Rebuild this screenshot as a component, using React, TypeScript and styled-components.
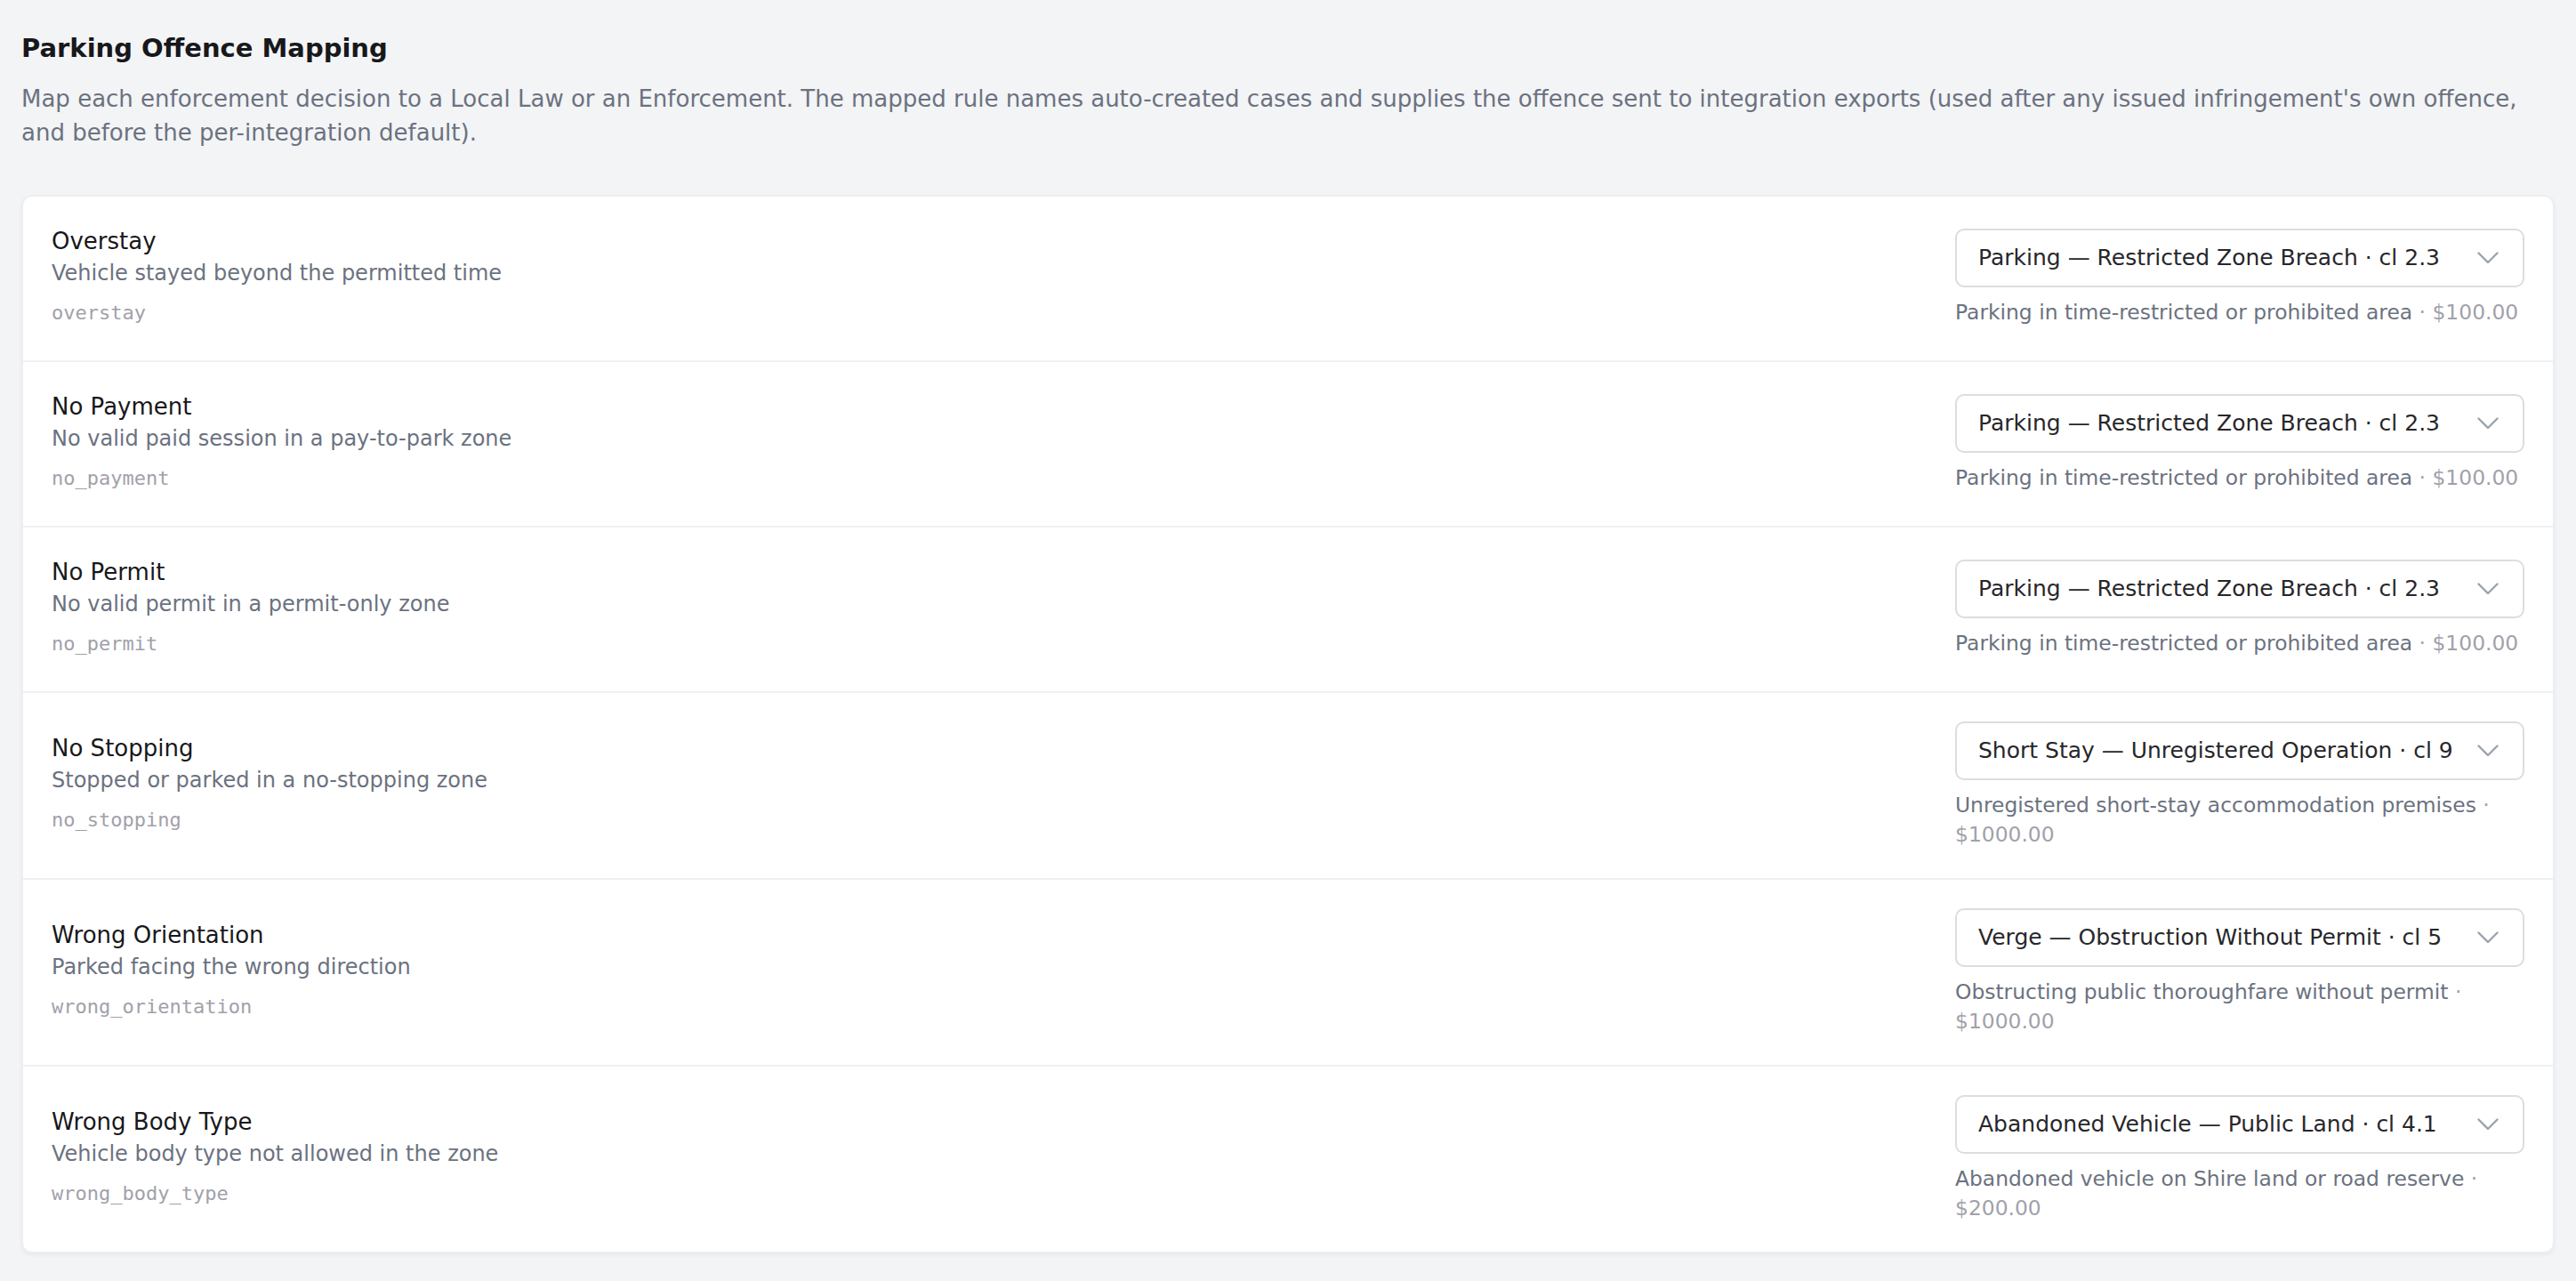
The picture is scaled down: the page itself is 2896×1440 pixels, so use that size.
import React from "react";
import styled, { createGlobalStyle } from "styled-components";

const GlobalStyle = createGlobalStyle`
  html, body {
    margin: 0;
    padding: 0;
    background: #f3f4f6;
  }
  body {
    font-family: "DejaVu Sans", "Noto Sans", sans-serif;
    color: #18181b;
    min-height: 100vh;
  }
  * { box-sizing: border-box; }
`;

const Page = styled.main`
  padding: 32px 24px 32px 24px;
  min-height: 100vh;
  background: #f3f4f6;
`;

const Title = styled.h1`
  margin: 0;
  font-family: "DejaVu Sans", sans-serif;
  font-size: 29px;
  font-weight: 700;
  line-height: 44px;
  color: #18181b;
`;

const Intro = styled.p`
  margin: 16px 0 0 0;
  font-size: 26px;
  line-height: 38.4px;
  color: #6b7280;
`;

const Card = styled.section`
  margin-top: 50px;
  background: #ffffff;
  border: 2px solid #eceef1;
  border-radius: 12px;
  box-shadow: 0 2px 4px rgba(17, 24, 39, 0.05);
  overflow: hidden;
`;

const Row = styled.div`
  display: flex;
  align-items: center;
  justify-content: space-between;
  gap: 48px;
  padding: 32px;
  & + & {
    border-top: 2px solid #f0f1f3;
  }
`;

const Info = styled.div`
  display: flex;
  flex-direction: column;
  min-width: 0;
  padding-bottom: 5px;
`;

const Name = styled.div`
  font-size: 26px;
  font-weight: 500;
  line-height: 36px;
  color: #18181b;
`;

const Description = styled.div`
  font-size: 24px;
  line-height: 36px;
  color: #6b7280;
`;

const Code = styled.code`
  margin-top: 10px;
  font-family: "DejaVu Sans Mono", "Liberation Mono", monospace;
  font-size: 22px;
  line-height: 33px;
  color: #a1a1aa;
`;

const Mapping = styled.div`
  width: 640px;
  flex-shrink: 0;
  display: flex;
  flex-direction: column;
`;

const SelectButton = styled.button`
  display: flex;
  align-items: center;
  justify-content: space-between;
  gap: 16px;
  width: 100%;
  height: 66px;
  padding: 0 27px 0 24px;
  background: #ffffff;
  border: 2px solid #dcdde0;
  border-radius: 10px;
  font-family: "DejaVu Sans", sans-serif;
  font-size: 25px;
  line-height: 36px;
  color: #27272a;
  text-align: left;
  cursor: pointer;
`;

const SelectValue = styled.span`
  white-space: nowrap;
  overflow: hidden;
  text-overflow: ellipsis;
`;

const Chevron = styled.svg`
  flex-shrink: 0;
  width: 24px;
  height: 14px;
`;

const Hint = styled.div`
  margin-top: 12px;
  font-size: 23.4px;
  line-height: 33px;
  color: #6b7280;
`;

const Price = styled.span`
  color: #a1a1aa;
`;

type Item = {
  name: string;
  description: string;
  code: string;
  rule: string;
  hint: string;
  price: string;
};

const items: Item[] = [
  {
    name: "Overstay",
    description: "Vehicle stayed beyond the permitted time",
    code: "overstay",
    rule: "Parking — Restricted Zone Breach · cl 2.3",
    hint: "Parking in time-restricted or prohibited area",
    price: "$100.00",
  },
  {
    name: "No Payment",
    description: "No valid paid session in a pay-to-park zone",
    code: "no_payment",
    rule: "Parking — Restricted Zone Breach · cl 2.3",
    hint: "Parking in time-restricted or prohibited area",
    price: "$100.00",
  },
  {
    name: "No Permit",
    description: "No valid permit in a permit-only zone",
    code: "no_permit",
    rule: "Parking — Restricted Zone Breach · cl 2.3",
    hint: "Parking in time-restricted or prohibited area",
    price: "$100.00",
  },
  {
    name: "No Stopping",
    description: "Stopped or parked in a no-stopping zone",
    code: "no_stopping",
    rule: "Short Stay — Unregistered Operation · cl 9",
    hint: "Unregistered short-stay accommodation premises",
    price: "$1000.00",
  },
  {
    name: "Wrong Orientation",
    description: "Parked facing the wrong direction",
    code: "wrong_orientation",
    rule: "Verge — Obstruction Without Permit · cl 5",
    hint: "Obstructing public thoroughfare without permit",
    price: "$1000.00",
  },
  {
    name: "Wrong Body Type",
    description: "Vehicle body type not allowed in the zone",
    code: "wrong_body_type",
    rule: "Abandoned Vehicle — Public Land · cl 4.1",
    hint: "Abandoned vehicle on Shire land or road reserve",
    price: "$200.00",
  },
];

function ChevronDown() {
  return (
    <Chevron viewBox="0 0 24 14" fill="none" aria-hidden="true">
      <polyline
        points="1.5,1.5 12,12 22.5,1.5"
        stroke="#9ca3af"
        strokeWidth="2.4"
        strokeLinecap="round"
        strokeLinejoin="round"
      />
    </Chevron>
  );
}

export default function App() {
  return (
    <>
      <GlobalStyle />
      <Page>
        <Title>Parking Offence Mapping</Title>
        <Intro>
          Map each enforcement decision to a Local Law or an Enforcement. The mapped rule names
          auto-created cases and supplies the offence sent to integration exports (used after any
          issued infringement's own offence, and before the per-integration default).
        </Intro>
        <Card>
          {items.map((item) => (
            <Row key={item.code}>
              <Info>
                <Name>{item.name}</Name>
                <Description>{item.description}</Description>
                <Code>{item.code}</Code>
              </Info>
              <Mapping>
                <SelectButton type="button">
                  <SelectValue>{item.rule}</SelectValue>
                  <ChevronDown />
                </SelectButton>
                <Hint>
                  {item.hint}
                  <Price> · {item.price}</Price>
                </Hint>
              </Mapping>
            </Row>
          ))}
        </Card>
      </Page>
    </>
  );
}
